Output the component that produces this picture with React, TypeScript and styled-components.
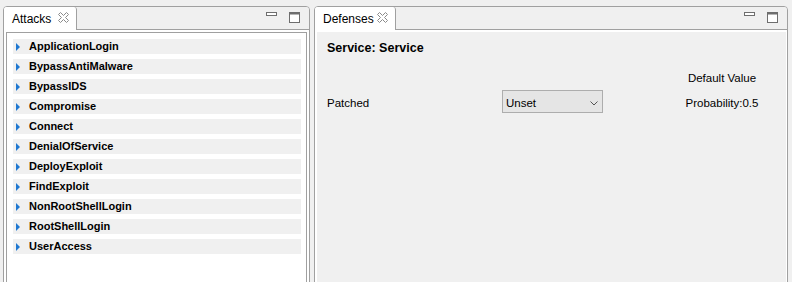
import styled, { createGlobalStyle } from 'styled-components'

const GlobalStyle = createGlobalStyle`
  html, body {
    margin: 0;
    padding: 0;
    background: #f0f0f0;
    overflow: hidden;
    font-family: "Liberation Sans", Arial, sans-serif;
    color: #000;
  }
`

const Workbench = styled.div`
  display: flex;
  gap: 4px;
  padding: 6px 4px 0 3px;
  height: 100vh;
  box-sizing: border-box;
`

const Panel = styled.section<{ $width: number }>`
  width: ${p => p.$width}px;
  height: calc(100vh + 4px);
  box-sizing: border-box;
  border: 1px solid #a0a0a0;
  border-radius: 4px 4px 0 0;
  display: flex;
  flex-direction: column;
  overflow: hidden;
`

const Header = styled.div`
  display: flex;
  height: 23px;
  flex: none;
  box-sizing: border-box;
  border-bottom: 1px solid #a0a0a0;
  background: #f0f0f0;
`

const Tab = styled.div<{ $width: number }>`
  width: ${p => p.$width}px;
  height: 23px;
  flex: none;
  box-sizing: border-box;
  display: flex;
  align-items: center;
  padding: 0 6px 0 8px;
  background: #fff;
  border-right: 1px solid #a0a0a0;
  border-top-right-radius: 3px;
  font-size: 12px;
  line-height: 14px;
`

const TabClose = styled.svg`
  margin-left: auto;
  flex: none;
  margin-top: -1px;
`

const ViewTools = styled.div`
  margin-left: auto;
  display: flex;
  align-items: flex-start;
  gap: 12px;
  padding: 5px 9px 0 0;
`

const Body = styled.div<{ $fill: string }>`
  flex: 1;
  background: #fff;
  padding: 2px 2px 0 2px;
  display: flex;
  min-height: 0;
`

const TreeFrame = styled.div`
  flex: 1;
  border: 1px solid #a0a0a0;
  background: #fff;
  padding: 6px 5px 0 6px;
  display: flex;
  flex-direction: column;
  gap: 5px;
`

const TreeRow = styled.div`
  height: 15px;
  display: flex;
  align-items: center;
  background: #f0f0f0;
  padding-left: 3px;
  font-size: 11px;
  font-weight: bold;
  line-height: 15px;
`

const Twisty = styled.svg`
  flex: none;
  margin-right: 9px;
`

const FormArea = styled.div`
  flex: 1;
  background: #f0f0f0;
  padding: 8px 0 0 10px;
  margin-right: -1px;
`

const Title = styled.div`
  font-size: 12.5px;
  font-weight: bold;
  line-height: 17px;
  height: 17px;
  margin-bottom: 14px;
`

const Grid = styled.div`
  display: grid;
  grid-template-columns: 175px 101px 1fr;
  row-gap: 5px;
  font-size: 11.5px;
  line-height: 14px;
  align-items: start;
`

const ValueCell = styled.div<{ $top?: number }>`
  padding-left: 55px;
  text-align: center;
  white-space: nowrap;
  margin-top: ${p => p.$top ?? 0}px;
`

const Label = styled.div`
  margin-top: 6px;
`

const Select = styled.div`
  height: 23px;
  box-sizing: border-box;
  border: 1px solid #adadad;
  background: #e5e5e5;
  display: flex;
  align-items: flex-start;
  padding: 5px 4px 0 3px;
`

const Chevron = styled.svg`
  margin-left: auto;
  margin-top: 5px;
  margin-right: 0;
`

const attacks = [
  'ApplicationLogin',
  'BypassAntiMalware',
  'BypassIDS',
  'Compromise',
  'Connect',
  'DenialOfService',
  'DeployExploit',
  'FindExploit',
  'NonRootShellLogin',
  'RootShellLogin',
  'UserAccess',
]

function CloseIcon() {
  return (
    <TabClose width="12" height="12" viewBox="0 0 12 12">
      <polygon
        points="0.5,2.5 2.5,0.5 5.5,3.5 8.5,0.5 10.5,2.5 7.5,5.5 10.5,8.5 8.5,10.5 5.5,7.5 2.5,10.5 0.5,8.5 3.5,5.5"
        fill="#fff"
        stroke="#8a8a8a"
        strokeWidth="1"
      />
    </TabClose>
  )
}

function Tools() {
  return (
    <ViewTools>
      <svg width="11" height="5" viewBox="0 0 11 5">
        <rect x="0.5" y="0.5" width="10" height="3" fill="#fff" stroke="#6e6e6e" />
      </svg>
      <svg width="11" height="11" viewBox="0 0 11 11">
        <rect x="0.5" y="0.5" width="10" height="10" fill="#fff" stroke="#6e6e6e" />
        <rect x="0.5" y="0.5" width="10" height="2" fill="#6e6e6e" />
      </svg>
    </ViewTools>
  )
}

export default function App() {
  return (
    <>
      <GlobalStyle />
      <Workbench>
        <Panel $width={307}>
          <Header>
            <Tab $width={73}>
              Attacks
              <CloseIcon />
            </Tab>
            <Tools />
          </Header>
          <Body $fill="#fff">
            <TreeFrame>
              {attacks.map(name => (
                <TreeRow key={name}>
                  <Twisty width="4" height="8" viewBox="0 0 4 8">
                    <polygon points="0,0 4,4 0,8" fill="#1f78d1" />
                  </Twisty>
                  {name}
                </TreeRow>
              ))}
            </TreeFrame>
          </Body>
        </Panel>

        <Panel $width={474}>
          <Header>
            <Tab $width={81}>
              Defenses
              <CloseIcon />
            </Tab>
            <Tools />
          </Header>
          <Body $fill="#f0f0f0">
            <FormArea>
              <Title>Service: Service</Title>
              <Grid>
                <div />
                <div />
                <ValueCell>Default Value</ValueCell>
                <Label>Patched</Label>
                <Select>
                  Unset
                  <Chevron width="8" height="5" viewBox="0 0 8 5">
                    <polyline points="0.5,0.5 4,4 7.5,0.5" fill="none" stroke="#555" strokeWidth="1" />
                  </Chevron>
                </Select>
                <ValueCell $top={6}>Probability:0.5</ValueCell>
              </Grid>
            </FormArea>
          </Body>
        </Panel>
      </Workbench>
    </>
  )
}
